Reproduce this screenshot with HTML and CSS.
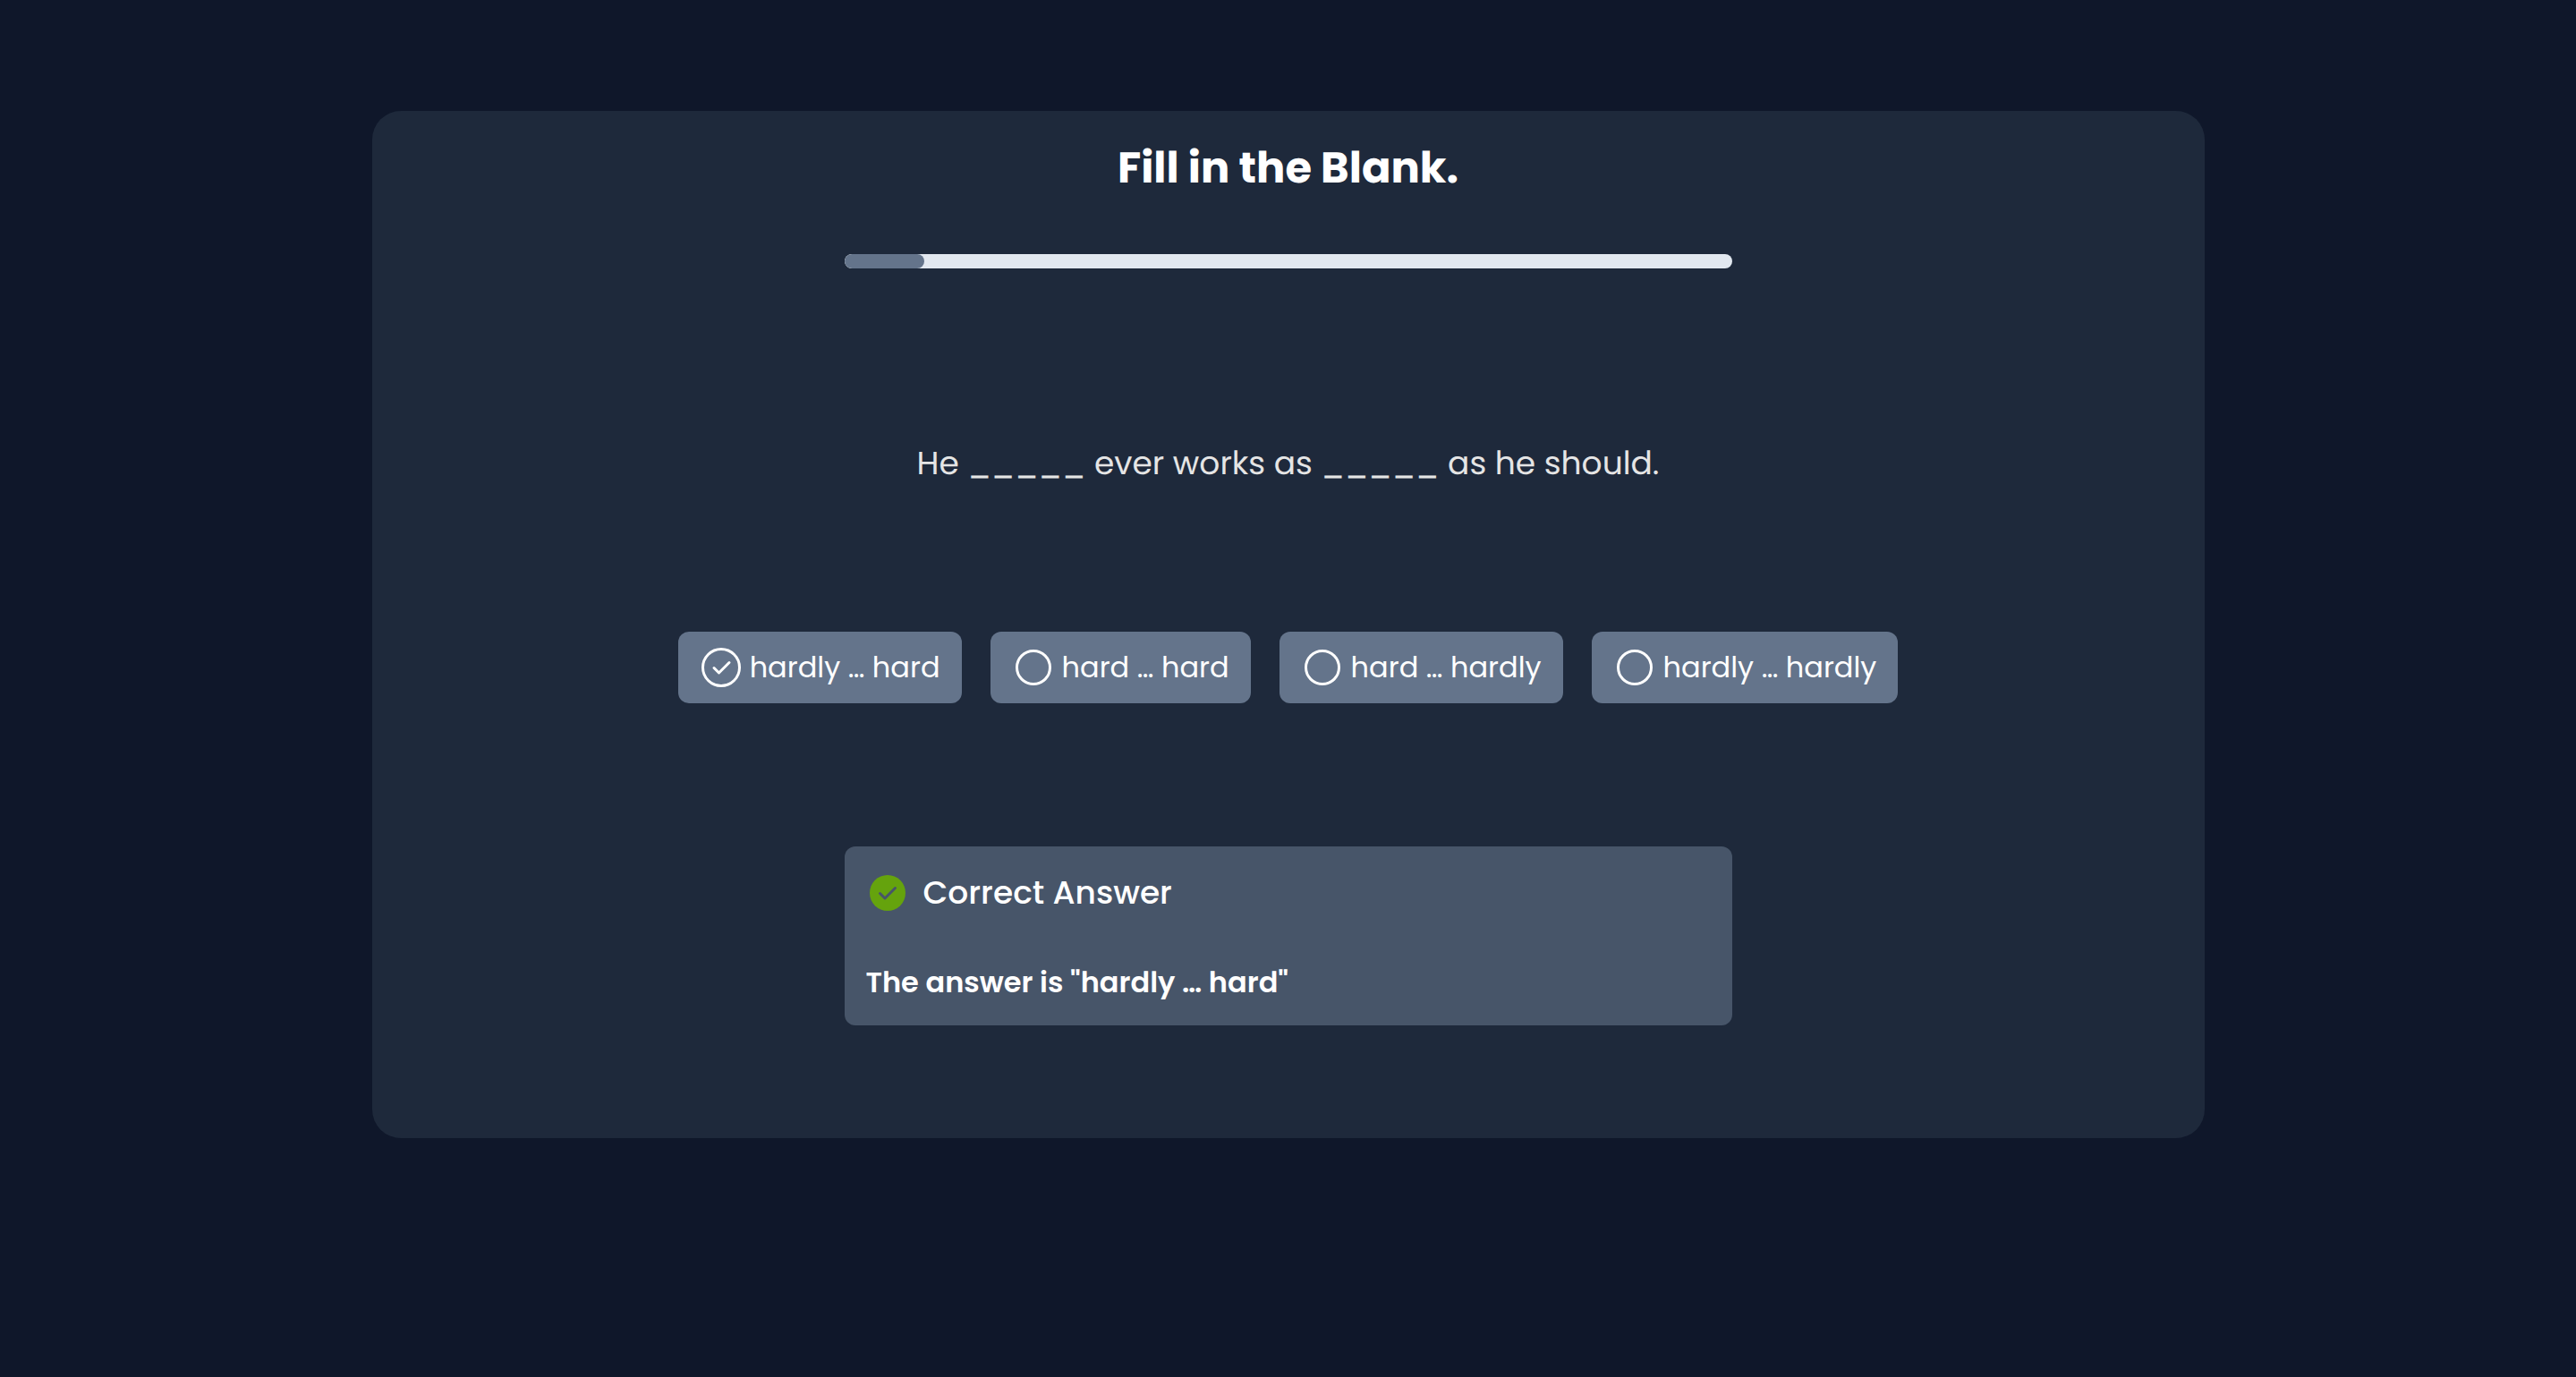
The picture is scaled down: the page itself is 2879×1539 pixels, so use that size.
FILE: index.html
```html
<!DOCTYPE html>
<html lang="en">
<head>
  <meta charset="utf-8">
  <meta name="viewport" content="width=device-width, initial-scale=1">
  <title>Fill in the Blank</title>
  <link rel="stylesheet" href="styles.css">
</head>
<body>
  <main class="quiz">
    <h1 class="quiz-title">Fill in the Blank.</h1>
    <progress class="quiz-progress" value="9" max="100" aria-label="Quiz progress"></progress>
    <p class="question" id="question">He _____ ever works as _____ as he should.</p>
    <form class="options" role="radiogroup" aria-labelledby="question">
      <label class="option">
        <span class="mark">
          <input class="radio" type="radio" name="answer" checked>
          <svg class="tick" viewBox="0 0 48 48" aria-hidden="true"><path d="M16 24.500l5.500 5.500L33 18.500"/></svg>
        </span>
        <span>hardly … hard</span>
      </label>
      <label class="option">
        <span class="mark"><input class="radio" type="radio" name="answer"></span>
        <span>hard … hard</span>
      </label>
      <label class="option">
        <span class="mark"><input class="radio" type="radio" name="answer"></span>
        <span>hard … hardly</span>
      </label>
      <label class="option">
        <span class="mark"><input class="radio" type="radio" name="answer"></span>
        <span>hardly … hardly</span>
      </label>
    </form>
    <section class="feedback">
      <h2 class="feedback-title">
        <svg class="feedback-icon" viewBox="0 0 48 48" aria-hidden="true">
          <circle cx="24" cy="24" r="20"/>
          <path d="M15.500 24.500l5.500 5.500L32.500 18.500"/>
        </svg>
        <span>Correct Answer</span>
      </h2>
      <p class="feedback-text">The answer is "hardly … hard"</p>
    </section>
  </main>
</body>
</html>
```

FILE: styles.css
```css
*,
*::before,
*::after {
  box-sizing: border-box;
}

body {
  margin: 0;
  padding: 124px 32px;
  background: #0f172a;
  color: #fff;
  font-family: Poppins, Inter, "Open Sans", sans-serif;
}

h1,
h2,
p {
  margin: 0;
}

.quiz {
  display: flex;
  flex-direction: column;
  align-items: center;
  max-width: 2048px;
  margin: 0 auto;
  padding: 32px 32px 126px;
  border-radius: 32px;
  background: #1e293b;
}

.quiz-title,
.question {
  text-rendering: geometricPrecision;
}

.quiz-title {
  font-size: 48px;
  line-height: 64px;
  font-weight: 700;
}

.quiz-progress {
  appearance: none;
  display: block;
  width: 100%;
  max-width: 992px;
  height: 16px;
  margin-top: 64px;
  border: 0;
  border-radius: 8px;
  overflow: hidden;
  background: #e2e8f0;
}

.quiz-progress::-webkit-progress-bar {
  background: #e2e8f0;
}

.quiz-progress::-webkit-progress-value {
  border-radius: 8px;
  background: #64748b;
}

.question {
  margin-top: 192px;
  color: #e5e5e5;
  font-size: 36px;
  line-height: 52px;
  text-align: center;
}

.options {
  display: flex;
  flex-wrap: wrap;
  justify-content: center;
  gap: 32px;
  margin-top: 162px;
}

.option {
  display: flex;
  align-items: center;
  gap: 8px;
  padding: 16px 24px;
  border-radius: 12px;
  background: #64748b;
  font-size: 32px;
  line-height: 48px;
  cursor: pointer;
}

.mark {
  display: grid;
  place-items: center;
  width: 48px;
  height: 48px;
}

.mark > * {
  grid-area: 1 / 1;
}

.radio {
  appearance: none;
  width: 40px;
  height: 40px;
  margin: 0;
  border: 3px solid #fff;
  border-radius: 50%;
}

.radio:checked {
  width: 44px;
  height: 44px;
}

.tick {
  width: 48px;
  height: 48px;
  fill: none;
  stroke: #fff;
  stroke-width: 3;
  stroke-linecap: round;
  stroke-linejoin: round;
}

.feedback {
  width: 100%;
  max-width: 992px;
  margin-top: 160px;
  padding: 24px;
  border-radius: 12px;
  background: #475569;
}

.feedback-title {
  display: flex;
  align-items: center;
  gap: 16px;
  font-size: 36px;
  line-height: 56px;
  font-weight: 500;
}

.feedback-icon {
  width: 48px;
  height: 48px;
  fill: #65a30d;
}

.feedback-icon path {
  fill: none;
  stroke: #475569;
  stroke-width: 3;
  stroke-linecap: round;
  stroke-linejoin: round;
}

.feedback-text {
  margin-top: 48px;
  font-size: 32px;
  line-height: 48px;
  font-weight: 600;
}
```
